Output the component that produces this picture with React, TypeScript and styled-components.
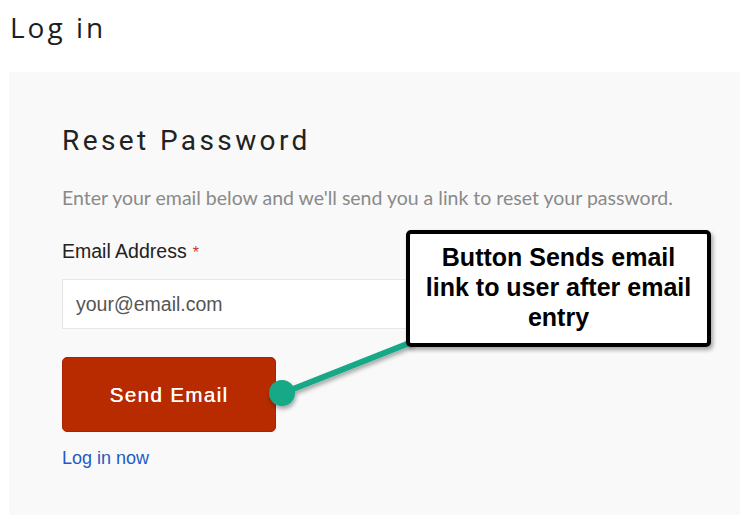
import React from "react";
import styled, { createGlobalStyle } from "styled-components";

const Global = createGlobalStyle`
  html, body { margin: 0; padding: 0; background: #ffffff; }
  body { width: 740px; height: 515px; overflow: hidden; font-family: "Liberation Sans", Arial, sans-serif; }
`;

const Page = styled.div`
  position: relative;
  width: 740px;
  height: 515px;
  display: flex;
  flex-direction: column;
  padding-left: 9px;
  box-sizing: border-box;
`;

const PageTitle = styled.h1`
  margin: 0;
  padding: 8px 0 0 1px;
  height: 72px;
  box-sizing: border-box;
  font-family: "Open Sans", sans-serif;
  font-weight: 400;
  font-size: 28px;
  letter-spacing: 3px;
  color: #1e1e1e;
  line-height: 38px;
`;

const Panel = styled.section`
  flex: 1;
  background: #f9f9f9;
  padding: 50px 0 0 53px;
  display: flex;
  flex-direction: column;
  align-items: flex-start;
`;

const Heading = styled.h2`
  margin: 0;
  font-family: Roboto, sans-serif;
  font-weight: 400;
  font-size: 28px;
  letter-spacing: 3.4px;
  color: #222;
  line-height: 38px;
`;

const Lead = styled.p`
  margin: 26px 0 0;
  font-family: Lato, sans-serif;
  font-size: 19.5px;
  color: #8a8a8a;
  line-height: 24px;
`;

const Label = styled.label`
  margin-top: 29px;
  font-size: 19.5px;
  color: #222;
  line-height: 24px;
`;

const Req = styled.span`
  color: #c0392b;
  font-size: 16px;
  margin-left: 6px;
`;

const Input = styled.input`
  margin-top: 14px;
  width: 560px;
  height: 50px;
  box-sizing: border-box;
  border: 1px solid #e6e6e6;
  background: #fff;
  padding: 0 13px;
  font-family: "Liberation Sans", Arial, sans-serif;
  font-size: 19.5px;
  outline: none;
  &::placeholder { color: #555; }
`;

const SendButton = styled.button`
  margin-top: 28px;
  width: 214px;
  height: 75px;
  border: 1px solid #a82500;
  border-radius: 5px;
  background: #b82b00;
  color: #fff;
  font-family: "Liberation Sans", Arial, sans-serif;
  font-size: 20.5px;
  letter-spacing: 1.4px;
  text-shadow: 0.4px 0 0 #fff;
  cursor: pointer;
`;

const Link = styled.a`
  margin-top: 14px;
  font-size: 18px;
  color: #1f5bc6;
  text-decoration: none;
  line-height: 24px;
`;

const Callout = styled.div`
  position: absolute;
  left: 406px;
  top: 230px;
  width: 305px;
  height: 117px;
  box-sizing: border-box;
  border: 4px solid #000;
  border-radius: 5px;
  background: #fff;
  box-shadow: 2px 3px 4px rgba(0,0,0,0.35);
  display: flex;
  align-items: center;
  justify-content: center;
  padding-bottom: 3px;
  text-align: center;
  font-family: "Liberation Sans", Arial, sans-serif;
  font-weight: 700;
  font-size: 25px;
  line-height: 30px;
  color: #000;
  z-index: 2;
`;

const Connector = styled.svg`
  position: absolute;
  left: 0;
  top: 0;
  z-index: 1;
  overflow: visible;
`;

export default function App() {
  return (
    <>
      <Global />
      <Page>
        <PageTitle>Log in</PageTitle>
        <Panel>
          <Heading>Reset Password</Heading>
          <Lead>Enter your email below and we'll send you a link to reset your password.</Lead>
          <Label>
            Email Address<Req>*</Req>
          </Label>
          <Input placeholder="your@email.com" />
          <SendButton>Send Email</SendButton>
          <Link href="#">Log in now</Link>
        </Panel>
        <Connector width="740" height="515">
          <defs>
            <filter id="sh" x="-20%" y="-20%" width="140%" height="140%">
              <feDropShadow dx="1" dy="3" stdDeviation="2" floodColor="#000" floodOpacity="0.35" />
            </filter>
          </defs>
          <g filter="url(#sh)">
            <line x1="283" y1="393" x2="412" y2="342" stroke="#12a887" strokeWidth="6" />
            <circle cx="282" cy="393" r="13" fill="#12a887" />
          </g>
        </Connector>
        <Callout>
          Button Sends email
          <br />
          link to user after email
          <br />
          entry
        </Callout>
      </Page>
    </>
  );
}
